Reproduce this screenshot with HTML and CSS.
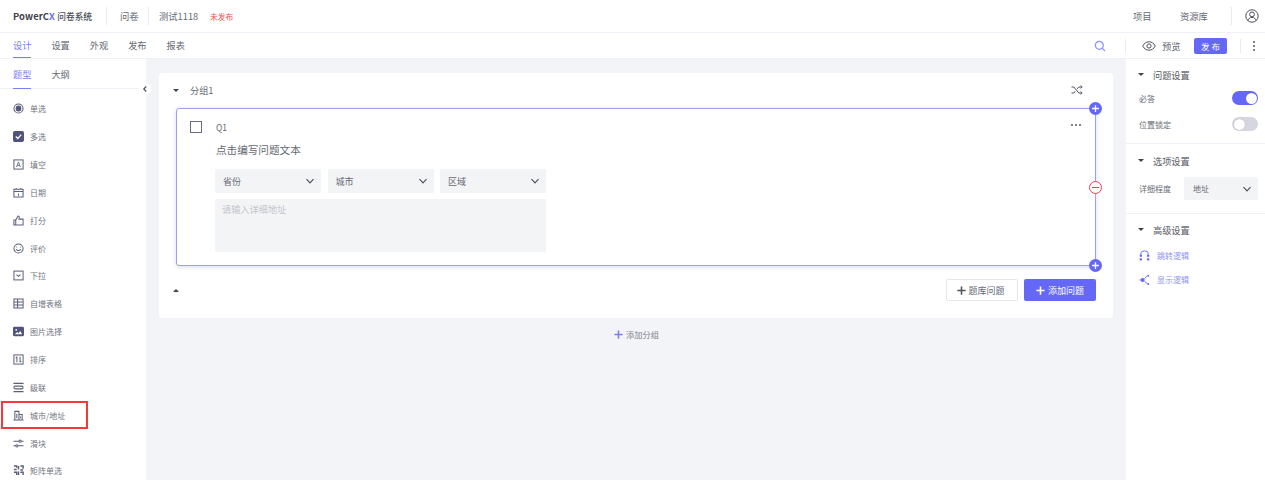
FILE: index.html
```html
<!DOCTYPE html>
<html lang="zh">
<head>
<meta charset="utf-8">
<title>PowerCX 问卷系统</title>
<link rel="stylesheet" href="styles.css">
</head>
<body>
<svg class="defs" width="0" height="0" aria-hidden="true">
  <symbol id="chev" viewBox="0 0 12 12"><path d="M2.5 4.2 6 7.8l3.5-3.6" fill="none" stroke="currentColor" stroke-width="1.2"/></symbol>
  <symbol id="plus" viewBox="0 0 12 12"><path d="M6 1.5v9M1.5 6h9" fill="none" stroke="currentColor" stroke-width="1.7"/></symbol>
</svg>
<header class="topbar">
  <div class="logo">PowerC<span class="logo-x">X</span> <span class="logo-cn">问卷系统</span></div>
  <span class="vline vline-a"></span>
  <span class="crumb crumb-a">问卷</span>
  <span class="vline vline-b"></span>
  <span class="crumb crumb-b">测试1118</span>
  <span class="status">未发布</span>
  <span class="spacer"></span>
  <span class="crumb top-link-a">项目</span>
  <span class="crumb top-link-b">资源库</span>
  <span class="vline vline-c"></span>
  <svg class="user" viewBox="0 0 14 14"><circle cx="7" cy="7" r="6.2"/><circle cx="7" cy="5.4" r="2.4"/><path d="M2.8 11.6c.8-2.2 2.300-3.200 4.200-3.200s3.400 1 4.200 3.200"/></svg>
</header>
<nav class="tabbar">
  <a class="tab active">设计</a><a class="tab">设置</a><a class="tab">外观</a><a class="tab">发布</a><a class="tab">报表</a>
  <span class="spacer"></span>
  <svg class="search" viewBox="0 0 12 12"><circle cx="5.300" cy="5.300" r="4"/><path d="m8.200 8.200 2.800 2.800"/></svg>
  <span class="vline vline-d"></span>
  <svg class="eye" viewBox="0 0 14 10"><path d="M.7 5C2.300 2 4.500.8 7 .8S11.700 2 13.300 5C11.700 8 9.500 9.200 7 9.200S2.300 8 .7 5Z"/><circle cx="7" cy="5" r="2.100"/></svg>
  <span class="preview">预览</span>
  <button class="publish">发 布</button>
  <span class="vline vline-e"></span>
  <span class="dots"><i></i><i></i><i></i></span>
</nav>
<div class="workspace">
  <aside class="sidebar">
    <div class="side-tabs"><a class="side-tab active">题型</a><a class="side-tab">大纲</a></div>
    <span class="collapse"><svg viewBox="0 0 8 8"><path d="M5.200 1.500 2.800 4l2.400 2.500"/></svg></span>
    <ul class="types">
      <li class="type"><svg viewBox="0 0 12 12"><circle cx="6" cy="6" r="5"/><circle class="fill" cx="6" cy="6" r="2.600"/></svg>单选</li>
      <li class="type"><svg viewBox="0 0 12 12"><rect class="fill" x=".6" y=".6" width="10.800" height="10.800" rx="1.500"/><path class="check" d="m3 6 2.200 2.200L9 4"/></svg>多选</li>
      <li class="type"><svg viewBox="0 0 12 12"><rect x="1" y="1" width="10" height="10"/><path class="thin" d="M3.800 8.800 6 3.200l2 5.600M4.600 7h2.800"/></svg>填空</li>
      <li class="type"><svg viewBox="0 0 12 12"><path d="M1 2.500h10v8.500H1zM1 5h10M3.500 1v2M8.500 1v2M6 7v2.500"/></svg>日期</li>
      <li class="type"><svg viewBox="0 0 12 12"><path d="M1 5.500h2V11H1zM3 5.500 5.500 1c1.200 0 1.500 1 1.300 2L6.500 4.500H11V11H3"/></svg>打分</li>
      <li class="type"><svg viewBox="0 0 12 12"><circle cx="6" cy="6" r="5"/><path d="M3.500 6.800c1.200 2 3.800 2 5 0M4 4v1M8 4v1"/></svg>评价</li>
      <li class="type"><svg viewBox="0 0 12 12"><rect x="1" y="1.200" width="10" height="9.600"/><path d="m3.800 5 2.200 2 2.200-2"/></svg>下拉</li>
      <li class="type"><svg viewBox="0 0 12 12"><path d="M1 1h10v10H1zM1 4.300h10M1 7.700h10M5 1v10"/></svg>自增表格</li>
      <li class="type"><svg viewBox="0 0 12 12"><rect class="fill" x=".6" y="1.500" width="10.800" height="9" rx="1"/><circle class="hole" cx="3.500" cy="4.200" r="1"/><path class="hole" d="m2 9 2.500-2.500L6 8l2-2.500L10 9Z"/></svg>图片选择</li>
      <li class="type"><svg viewBox="0 0 12 12"><rect x="1" y="1" width="10" height="10"/><path d="M4.300 3v6M3 4.300 4.300 3M7.700 3v6M9 7.700 7.700 9"/></svg>排序</li>
      <li class="type"><svg viewBox="0 0 12 12"><path d="M.5 1.500h11M2.500 4.500h7a1.500 1.500 0 0 1 0 3h-7a1.500 1.500 0 0 1 0-3ZM.5 10.500h11"/></svg>级联</li>
      <li class="type marked"><svg viewBox="0 0 12 12"><path d="M2 11V1.500h4.500V11M6.500 5H10v6M.5 11h11M4.200 4v5M8.200 7v2"/></svg>城市/地址</li>
      <li class="type"><svg viewBox="0 0 12 12"><path d="M.5 3.500h6M9 3.500h2.500M.5 8.500H3M5.500 8.500h6"/><circle cx="7.800" cy="3.500" r="1.200"/><circle cx="4.200" cy="8.500" r="1.200"/></svg>滑块</li>
      <li class="type"><svg viewBox="0 0 12 12"><path class="wide" d="M1 1h3v2M8 1h3v3M1 5h3M8 5.500h3M6 1v4M6 7v4M1 8h3v3M8 8h3v3"/></svg>矩阵单选</li>
    </ul>
  </aside>
  <main class="canvas">
    <section class="group">
      <div class="group-head">
        <span class="tri"></span><span class="group-name">分组1</span>
        <span class="spacer"></span>
        <svg class="shuffle" viewBox="0 0 12 12"><path d="M.5 3h2.300l5 6h3M.5 9h2.300l1.500-1.800M6.200 4.900 7.800 3h3M9.700 1.500l1.500 1.500-1.500 1.500M9.700 7.500l1.500 1.500-1.500 1.500"/></svg>
      </div>
      <article class="question">
        <div class="q-row">
          <span class="q-check"></span><span class="q-no">Q1</span>
          <span class="spacer"></span>
          <span class="more"><i></i><i></i><i></i></span>
        </div>
        <h2 class="q-title">点击编写问题文本</h2>
        <div class="selects">
          <div class="select">省份<svg><use href="#chev"/></svg></div>
          <div class="select">城市<svg><use href="#chev"/></svg></div>
          <div class="select">区域<svg><use href="#chev"/></svg></div>
        </div>
        <div class="detail">请输入详细地址</div>
        <span class="dot dot-top"><svg><use href="#plus"/></svg></span>
        <span class="dot dot-mid"></span>
        <span class="dot dot-bottom"><svg><use href="#plus"/></svg></span>
      </article>
      <div class="group-foot">
        <span class="tri tri-up"></span>
        <span class="spacer"></span>
        <button class="btn btn-ghost"><svg><use href="#plus"/></svg>题库问题</button>
        <button class="btn btn-primary"><svg><use href="#plus"/></svg>添加问题</button>
      </div>
    </section>
    <div class="add-group"><svg><use href="#plus"/></svg>添加分组</div>
  </main>
  <aside class="settings">
    <section class="panel panel-a">
      <h3 class="panel-title"><span class="tri"></span>问题设置</h3>
      <div class="row row-a"><span>必答</span><span class="toggle on"></span></div>
      <div class="row row-b"><span>位置锁定</span><span class="toggle"></span></div>
    </section>
    <section class="panel panel-b">
      <h3 class="panel-title"><span class="tri"></span>选项设置</h3>
      <div class="row row-c"><span>详细程度</span><div class="mini-select">地址<svg><use href="#chev"/></svg></div></div>
    </section>
    <section class="panel panel-c">
      <h3 class="panel-title"><span class="tri"></span>高级设置</h3>
      <div class="logic"><svg viewBox="0 0 12 12"><path d="M2 5V3.500a4 2.500 0 0 1 8 0V5"/><rect class="p" x=".8" y="5" width="2.400" height="2.400"/><rect class="p" x="8.800" y="5" width="2.400" height="2.400"/><rect class="p" x=".8" y="9" width="2.400" height="2.400"/><rect class="p" x="8.800" y="9" width="2.400" height="2.400"/></svg>跳转逻辑</div>
      <div class="logic"><svg viewBox="0 0 12 12"><circle class="p" cx="4" cy="6.500" r="2.200"/><path d="M.5 6.500H2M6 5l3-3M6 8l3 2.500"/><circle class="p" cx="10" cy="1.800" r="1.100"/><circle class="p" cx="10" cy="10.800" r="1.100"/></svg>显示逻辑</div>
    </section>
  </aside>
</div>
</body>
</html>
```
FILE: styles.css
```css
* { box-sizing: border-box; }
html, body { margin: 0; height: 480px; overflow: hidden; }
body {
  width: 1265px;
  background: #fff;
  color: #666a75;
  font-family: "Noto Sans CJK SC", "Liberation Sans", sans-serif;
  font-size: 9.3px;
  display: flex;
  flex-direction: column;
}
.defs { position: absolute; }
.spacer { flex: 1; }
.vline { width: 1px; background: #e9ebf0; flex: none; }

/* top bar */
.topbar {
  height: 33px;
  flex: none;
  display: flex;
  align-items: center;
  border-bottom: 1px solid #f0f1f6;
  padding-left: 13px;
}
.logo { width: 93px; font-weight: 700; font-size: 9.4px; color: #3c3f49; white-space: nowrap; letter-spacing: .1px; }
.logo-x { color: #6c6ff5; }
.logo-cn { font-weight: 500; font-size: 8.7px; letter-spacing: 0; color: #4a4d57; }
.topbar .vline { height: 18px; }
.crumb { font-size: 9.3px; line-height: 14px; white-space: nowrap; }
.crumb-a { margin-left: 13px; width: 28px; }
.crumb-b { margin-left: 10px; width: 51px; }
.status { color: #f24a4a; font-size: 7.8px; }
.top-link-a { width: 47px; }
.top-link-b { width: 51px; }
.user { width: 14px; height: 14px; margin: 0 6px 0 13px; fill: none; stroke: #4b4e5a; stroke-width: 1; }

/* tab bar */
.tabbar {
  height: 26px;
  flex: none;
  display: flex;
  align-items: center;
  padding-left: 13px;
  border-bottom: 1px solid #f0f1f6;
}
.tab {
  height: 25px;
  margin-right: 20px;
  line-height: 25px;
  font-size: 9.2px;
  position: relative;
}
.tab.active { color: #7b7ef6; box-shadow: inset 0 -1px #7b7ef6; }
.search { width: 12px; height: 12px; fill: none; stroke: #8c8ff8; stroke-width: 1.200; margin-right: 19px; }
.tabbar .vline { height: 14px; }
.eye { width: 14px; height: 10px; margin-left: 16px; fill: none; stroke: #50535f; stroke-width: 1; }
.preview { margin-left: 6px; width: 32px; font-size: 9.3px; }
.publish {
  width: 33px;
  height: 16px;
  padding: 0;
  border: 0;
  border-radius: 2px;
  background: #6568f6;
  color: #fff;
  font: inherit;
  font-size: 8.5px;
  margin-right: 13px;
}
.dots { display: flex; flex-direction: column; gap: 2px; margin: 0 10px 0 12px; }
.dots i { width: 2px; height: 2px; border-radius: 50%; background: #55585f; }

/* layout */
.workspace { flex: 1; display: flex; min-height: 0; }

/* sidebar */
.sidebar { width: 146px; flex: none; background: #fff; position: relative; }
.side-tabs {
  height: 30px;
  display: flex;
  padding-left: 13px;
  gap: 20px;
  border-bottom: 1px solid #f0f1f6;
}
.side-tab { height: 30px; line-height: 30px; font-size: 9.2px; }
.side-tab.active { color: #7b7ef6; box-shadow: inset 0 -1px #7b7ef6; }
.collapse {
  position: absolute;
  right: -5px;
  top: 23px;
  width: 13px;
  height: 13px;
  border-radius: 50%;
  background: #fff;
  display: flex;
  align-items: center;
  justify-content: center;
  z-index: 2;
}
.collapse svg { width: 8px; height: 8px; fill: none; stroke: #50535f; stroke-width: 1.200; }
.types { list-style: none; margin: 0; padding: 6px 0 0 13px; }
.type {
  height: 27.85px;
  display: flex;
  align-items: center;
  gap: 6px;
  font-size: 8px;
  color: #70747f;
  white-space: nowrap;
}
.type svg { width: 11px; height: 11px; flex: none; fill: none; stroke: #5b5f78; stroke-width: 1.100; }
.type svg .fill { fill: #50547a; stroke: #50547a; }
.type svg .check { stroke: #fff; stroke-width: 1.300; }
.type svg .thin { stroke-width: .9; }
.type svg .hole { fill: #fff; stroke: none; }
.type svg .wide { stroke-width: 1.600; }
.marked {
  position: relative;
  z-index: 1;
  outline: 2px solid #f23a3a;
  margin: 2px 0 2px -10px;
  height: 23.85px;
  padding-left: 10px;
  width: 83px;
}

/* canvas */
.canvas { flex: 1; background: #f3f4f8; padding: 14px 13px 0; min-width: 0; }
.group { height: 245px; background: #fff; border-radius: 3px; padding: 0 17px; }
.group-head { height: 34px; margin-bottom: 1px; display: flex; align-items: center; }
.tri {
  display: inline-block;
  width: 0;
  height: 0;
  border-left: 3px solid transparent;
  border-right: 3px solid transparent;
  border-top: 3.500px solid #3f4250;
  flex: none;
}
.tri-up { border-top: 0; border-bottom: 3.500px solid #3f4250; }
.group-head .tri { margin-left: -3px; }
.group-name { margin-left: 11px; font-size: 9.200px; }
.shuffle { width: 12px; height: 12px; margin-right: 13px; fill: none; stroke: #50535f; stroke-width: 1; }
.question {
  position: relative;
  height: 158px;
  width: 920px;
  border: 1px solid #9c9ef9;
  border-radius: 3px;
  box-shadow: 0 1px 4px rgba(102, 105, 246, .25);
  padding: 12px 13px 0 13px;
}
.q-row { height: 12px; display: flex; align-items: center; }
.q-check { width: 12px; height: 12px; border: 1px solid #6a6d80; flex: none; }
.q-no { margin-left: 14px; font-size: 8.500px; }
.more { display: flex; gap: 2px; margin-top: -5px; margin-right: 1px; }
.more i { width: 2px; height: 2px; border-radius: 50%; background: #55585f; }
.q-title { margin: 8px 0 0 26px; height: 17px; font-weight: 400; font-size: 10.600px; line-height: 17px; color: #666a75; }
.selects { display: flex; gap: 6.500px; margin: 11px 0 0 25px; width: 331px; }
.select {
  flex: 1;
  height: 24px;
  background: #f3f4f6;
  display: flex;
  align-items: center;
  justify-content: space-between;
  padding: 0 5px 0 8px;
  font-size: 9px;
  border-radius: 1px;
}
.select svg { width: 12px; height: 12px; color: #50535f; }
.detail {
  margin: 6px 0 0 25px;
  width: 331px;
  height: 53px;
  background: #f3f4f6;
  border-radius: 2px;
  padding: 3px 7px;
  font-size: 9.200px;
  line-height: 14px;
  color: #c3c5cb;
}
.dot {
  position: absolute;
  right: -7px;
  width: 13px;
  height: 13px;
  border-radius: 50%;
  background: #6568f6;
  display: flex;
  align-items: center;
  justify-content: center;
  color: #fff;
}
.dot svg { width: 9px; height: 9px; }
.dot-top { top: -7px; }
.dot-bottom { bottom: -7px; }
.dot-mid {
  top: 72px;
  background: #fff;
  border: 1.500px solid #f04050;
}
.dot-mid::before { content: ""; width: 7px; height: 1.500px; background: #f04050; }
.group-foot { height: 22px; margin-top: 13px; display: flex; align-items: center; width: 920px; }
.group-foot .tri { margin-left: -3px; }
.btn {
  width: 72px;
  height: 22px;
  padding: 0;
  border-radius: 2px;
  font: inherit;
  font-size: 9px;
  display: flex;
  align-items: center;
  justify-content: center;
  gap: 2px;
}
.btn svg { width: 11px; height: 11px; }
.btn-ghost { background: #fff; border: 1px solid #e6e7ec; color: #666a75; margin-right: 6px; padding-right: 3px; gap: 1px; }
.btn-ghost svg { color: #50535f; }
.btn-primary { background: #6568f6; border: 0; color: #fff; padding-right: 1px; }
.add-group { margin-top: 9px; height: 14px; display: flex; align-items: center; justify-content: center; gap: 2px; font-size: 8.200px; color: #80838d; }
.add-group svg { width: 11px; height: 11px; color: #7b7ef6; }

/* settings */
.settings { width: 139px; flex: none; background: #fff; }
.panel { border-bottom: 1px solid #f0f1f6; padding: 0 7px 0 13px; }
.panel-a { height: 85px; padding-top: 9px; }
.panel-b { height: 70px; padding-top: 10px; }
.panel-c { border-bottom: 0; padding-top: 9px; }
.panel-title {
  margin: 0;
  height: 13px;
  display: flex;
  align-items: center;
  font-weight: 400;
  font-size: 9.200px;
  color: #555862;
  gap: 9px;
}
.panel-title .tri { margin-left: -1px; }
.row { display: flex; align-items: center; justify-content: space-between; font-size: 8px; }
.row-a { height: 14px; margin-top: 10px; }
.row-b { height: 14px; margin-top: 12px; }
.row-c { height: 23px; margin-top: 10px; }
.toggle { width: 26px; height: 14px; border-radius: 7px; background: #d5d6e0; position: relative; flex: none; }
.toggle::after {
  content: "";
  position: absolute;
  top: 1.500px;
  left: 1.500px;
  width: 11px;
  height: 11px;
  border-radius: 50%;
  background: #fff;
  box-shadow: 0 0 1px rgba(0,0,0,.3);
}
.toggle.on { background: #6568f6; }
.toggle.on::after { left: 13.500px; }
.mini-select {
  width: 74px;
  height: 23px;
  background: #f3f4f6;
  border-radius: 2px;
  display: flex;
  align-items: center;
  justify-content: space-between;
  padding: 0 5px 0 9px;
  font-size: 8px;
}
.mini-select svg { width: 12px; height: 12px; color: #50535f; }
.logic { height: 14px; display: flex; align-items: center; gap: 7px; font-size: 8px; color: #8c8ff8; }
.panel-c .panel-title + .logic { margin-top: 12px; }
.logic + .logic { margin-top: 10px; }
.logic svg { width: 11px; height: 11px; margin-left: 0; fill: none; stroke: #6568f6; stroke-width: 1; }
.logic svg .p { fill: #6568f6; stroke: none; }
```
